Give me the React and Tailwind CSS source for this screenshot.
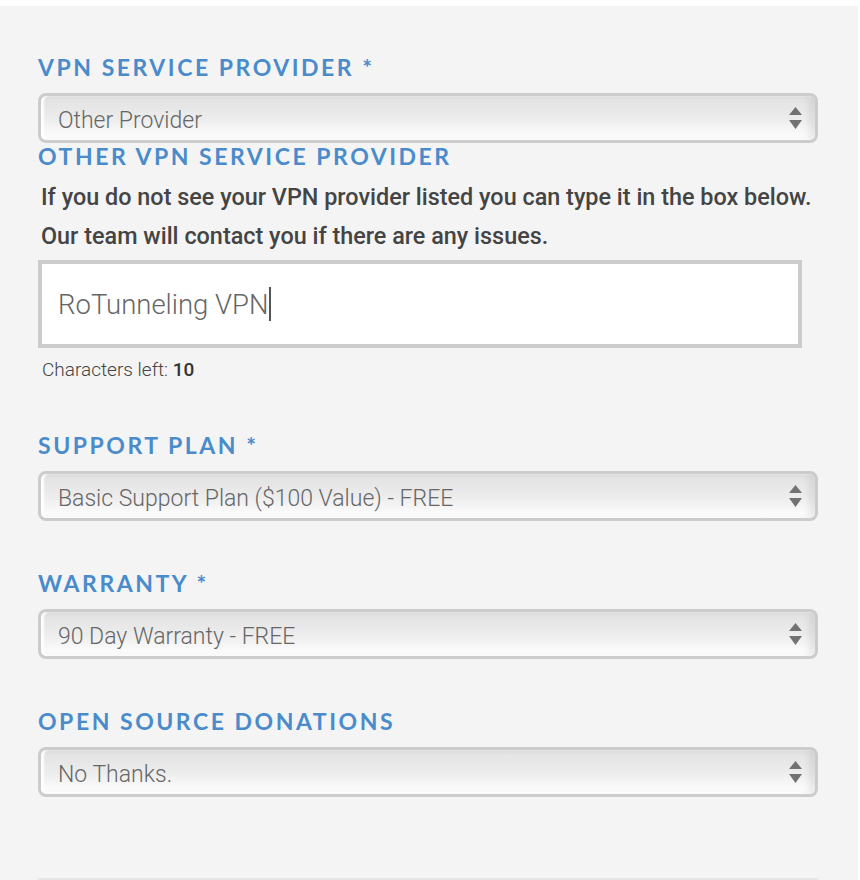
import React, { useState } from "react";

const heading = "font-['Lato','Noto_Sans',sans-serif] font-bold text-[23px] leading-[26px] tracking-[0.11em] text-[#4a8bcb] uppercase";
const body = "font-['Roboto','Liberation_Sans',sans-serif]";

function Arrows() {
  return (
    <svg width="13" height="23" viewBox="0 0 13 23" className="shrink-0">
      <path d="M6.5 0 L13 8 L0 8 Z" fill="#727272" />
      <path d="M0 13 L13 13 L6.5 22 Z" fill="#727272" />
    </svg>
  );
}

function SelectBox({ value }) {
  return (
    <div className="h-[50px] w-[780px] rounded-[8px] border-[3px] border-[#cccccc] bg-gradient-to-b from-[#e2e2e2] via-[#ececec] to-[#ffffff] shadow-[inset_3px_0_2px_rgba(255,255,255,0.95),inset_-6px_0_6px_rgba(0,0,0,0.07),inset_0_-2px_1px_rgba(255,255,255,1)] flex items-center pl-[17px] pr-[13px]">
      <span className={`${body} font-light text-[23px] text-[#666666] flex-1 pt-[7px]`}>{value}</span>
      <Arrows />
    </div>
  );
}

function Field({ label, value, top }) {
  return (
    <div className={`flex flex-col ${top}`}>
      <div className={heading}>{label}</div>
      <div className="mt-[13px]">
        <SelectBox value={value} />
      </div>
    </div>
  );
}

export default function App() {
  const [other] = useState("RoTunneling VPN");
  const max = 25;

  return (
    <div className="w-[860px] h-[880px] bg-white pt-[6px] overflow-hidden">
      <div className="w-[858px] h-[874px] bg-[#f4f4f4] pl-[38px] pt-[48px] flex flex-col">
        <Field label="VPN Service Provider *" value="Other Provider" top="" />

        <div className={heading}>Other VPN Service Provider</div>
        <p className={`${body} font-medium text-[23.4px] leading-[39px] text-[#444444] mt-[9px] pl-[3px] whitespace-nowrap`}>
          If you do not see your VPN provider listed you can type it in the box below.
          <br />
          Our team will contact you if there are any issues.
        </p>
        <div className="mt-[4px] w-[764px] h-[88px] border-[4px] border-[#cccccc] bg-white flex items-center pl-[16px]">
          <span className={`${body} font-light text-[27.5px] text-[#666666] pt-[2px]`}>{other}</span>
          <span className="w-[2px] h-[34px] bg-[#555555] ml-[1px]" />
        </div>
        <div className={`${body} font-light text-[19px] leading-[22px] text-[#444444] mt-[11px] pl-[4px]`}>
          Characters left: <span className="font-medium text-[#333333]">{max - other.length}</span>
        </div>

        <Field label="Support Plan *" value="Basic Support Plan ($100 Value) - FREE" top="mt-[51px]" />
        <Field label="Warranty *" value="90 Day Warranty - FREE" top="mt-[49px]" />
        <Field label="Open Source Donations" value="No Thanks." top="mt-[49px]" />

        <div className="mt-auto w-[780px] h-[2px] bg-[#e6e6e6]" />
      </div>
    </div>
  );
}
